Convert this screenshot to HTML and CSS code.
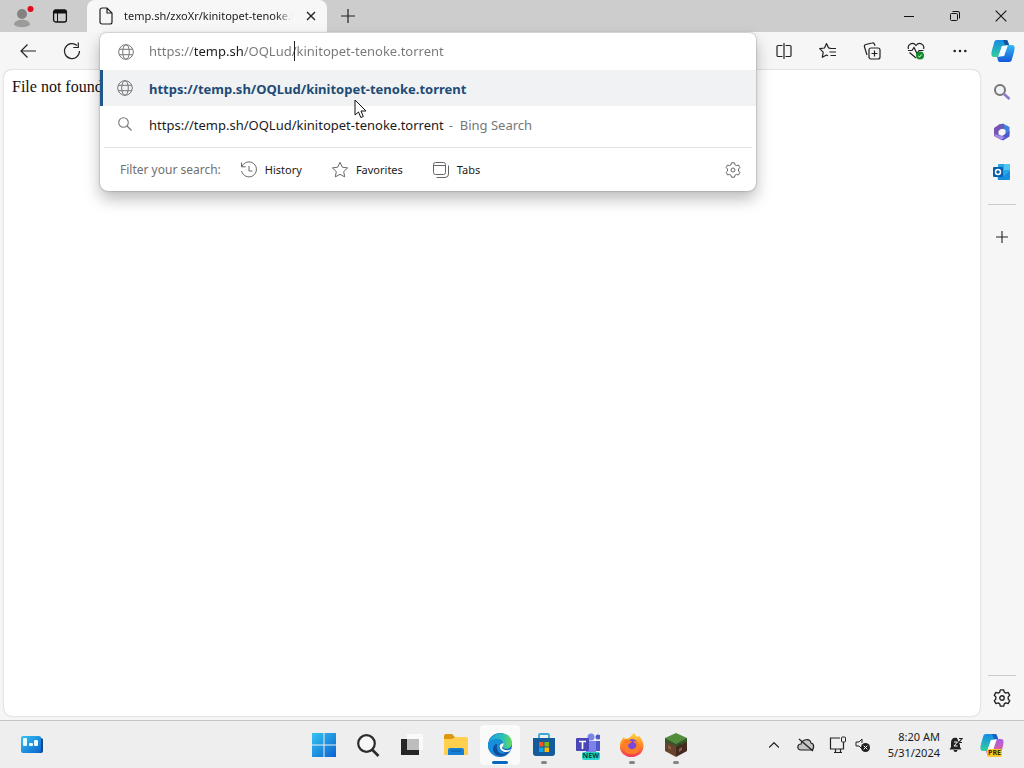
FILE: index.html
```html
<!DOCTYPE html>
<html lang="en">
<head>
<meta charset="utf-8">
<title>temp.sh</title>
<link rel="stylesheet" href="styles.css">
</head>
<body>
<svg class="defs" aria-hidden="true">
  <symbol id="globe" viewBox="0 0 16 16"><g fill="none" stroke="currentColor"><circle cx="8" cy="8" r="7.3"/><ellipse cx="8" cy="8" rx="3.3" ry="7.3"/><path d="M1.3 5.3h13.4M1.3 10.7h13.4"/></g></symbol>
  <linearGradient id="blue" x2="1" y2="1"><stop stop-color="#35c4f3"/><stop offset="1" stop-color="#0b62cf"/></linearGradient>
  <linearGradient id="edgeA" x2="1" y2="0"><stop stop-color="#1aa5df"/><stop offset=".6" stop-color="#2cbfb8"/><stop offset="1" stop-color="#6bdb58"/></linearGradient>
  <linearGradient id="copA" x2="0" y2="1"><stop stop-color="#168be8"/><stop offset="1" stop-color="#32cf9d"/></linearGradient>
  <linearGradient id="copB" x2="0" y2="1"><stop stop-color="#32b9f2"/><stop offset="1" stop-color="#1457dc"/></linearGradient>
  <linearGradient id="preB" x2="0" y2="1"><stop stop-color="#a95ee8"/><stop offset="1" stop-color="#f0647d"/></linearGradient>
  <linearGradient id="fox" x2="0" y2="1"><stop stop-color="#ffd83c"/><stop offset=".5" stop-color="#ff8a26"/><stop offset="1" stop-color="#f5325b"/></linearGradient>
</svg>

<header class="titlebar">
  <button class="title-btn profile" aria-label="Profile"><svg width="24" height="24" viewBox="0 0 24 24"><circle cx="12" cy="9" r="5" fill="#858381"/><path d="M4 19.500c0-6.500 16-6.500 16 0-2 3.500-14 3.500-16 0z" fill="#9d9b99"/><circle cx="20.500" cy="4" r="3" fill="#e00b1c"/></svg></button>
  <button class="title-btn workspaces" aria-label="Tab actions"><svg width="16" height="16" viewBox="0 0 16 16"><rect x="1.600" y="2" width="12.800" height="12" rx="2" fill="none" stroke="#111" stroke-width="1.300"/><path d="M2 2h12v3.500H2z" fill="#111"/><path d="M5.500 5v9" stroke="#111"/></svg></button>
  <div class="tab">
    <svg width="14" height="18" viewBox="0 0 14 18"><path d="M1 3a2 2 0 0 1 2-2h5l5 5v9a2 2 0 0 1-2 2H3a2 2 0 0 1-2-2zM8 1v5h5" fill="none" stroke="#222" stroke-width="1.200"/></svg>
    <span class="tab-title">temp.sh/zxoXr/kinitopet-tenoke.torrent</span>
    <button class="tab-close" aria-label="Close tab"><svg width="10" height="10" viewBox="0 0 10 10"><path d="M1 1l8 8M9 1L1 9" stroke="#222" stroke-width="1.400"/></svg></button>
  </div>
  <button class="new-tab" aria-label="New tab"><svg width="14" height="14" viewBox="0 0 14 14"><path d="M7 0v14M0 7h14" stroke="#222" stroke-width="1.200"/></svg></button>
  <div class="window-controls">
    <button aria-label="Minimize"><svg width="10" height="10" viewBox="0 0 10 10"><path d="M0 5.500h10" stroke="#111"/></svg></button>
    <button aria-label="Restore"><svg width="10" height="10" viewBox="0 0 10 10"><g fill="none" stroke="#111"><rect x=".5" y="2.500" width="7" height="7" rx="1"/><path d="M2.500.5H8A1.500 1.500 0 0 1 9.500 2v5.500"/></g></svg></button>
    <button aria-label="Close"><svg width="12" height="12" viewBox="0 0 12 12"><path d="M.7.7l10.600 10.600M11.300.7L.7 11.300" stroke="#111" stroke-width="1.100"/></svg></button>
  </div>
</header>

<nav class="toolbar">
  <button class="tool" aria-label="Back"><svg width="16" height="14" viewBox="0 0 16 14"><path d="M7.500.5L1 7l6.500 6.500M1 7h15" fill="none" stroke="#222" stroke-width="1.200"/></svg></button>
  <button class="tool" aria-label="Refresh"><svg width="18" height="18" viewBox="0 0 18 18"><path d="M16.500 9A7.500 7.500 0 1 1 14 3.500M15.300.5v5h-5" fill="none" stroke="#222" stroke-width="1.200"/></svg></button>
  <div class="omnibox">
    <div class="popup">
      <label class="address"><svg class="grey" width="16" height="16"><use href="#globe"/></svg><input class="url" type="text" aria-label="Address and search bar" value="https://temp.sh/OQLud/kinitopet-tenoke.torrent"><span class="caret"></span></label>
      <a class="suggestion active" href="#"><svg class="grey" width="16" height="16"><use href="#globe"/></svg><span>https://temp.sh/OQLud/kinitopet-tenoke.torrent</span></a>
      <a class="suggestion" href="#"><svg class="grey" width="16" height="16" viewBox="0 0 16 16"><circle cx="6.500" cy="6.500" r="4.800" fill="none" stroke="currentColor" stroke-width="1.100"/><path d="M10 10l4.500 4.500" stroke="currentColor" stroke-width="1.200"/></svg><span>https://temp.sh/OQLud/kinitopet-tenoke.torrent</span><span class="source">- &nbsp;Bing Search</span></a>
      <div class="filters">
        <span class="filter-label">Filter your search:</span>
        <button class="filter history"><svg width="18" height="18" viewBox="0 0 18 18"><path d="M2 5.500A7.500 7.500 0 1 1 1.600 10M1.500 1.500v4.300h4.300M9 5v5h3.500" fill="none" stroke="currentColor"/></svg><span>History</span></button>
        <button class="filter favorites"><svg width="18" height="18" viewBox="0 0 18 18"><path d="M9 1.300l2.300 4.900 5.300.7-3.900 3.700 1 5.300L9 13.300l-4.700 2.600 1-5.300-3.900-3.700 5.300-.7z" fill="none" stroke="currentColor" stroke-linejoin="round"/></svg><span>Favorites</span></button>
        <button class="filter tabs"><svg width="18" height="18" viewBox="0 0 18 18"><g fill="none" stroke="currentColor"><rect x="1.500" y="1.500" width="12" height="12" rx="2"/><path d="M1.500 4.500h12M4.500 16.500H13a3.500 3.500 0 0 0 3.500-3.500V4.500"/></g></svg><span>Tabs</span></button>
        <button class="filter settings" aria-label="Search settings"><svg width="16" height="16" viewBox="0 0 16 16"><g fill="none" stroke="currentColor"><path id="cog" d="M6.500.8h3l.5 2 1.400.8 2-.6 1.500 2.600L13.500 7v2l1.400 1.400-1.500 2.600-2-.6-1.400.8-.5 2h-3l-.5-2-1.400-.8-2 .6-1.500-2.600L2.500 9V7L1.100 5.600 2.600 3l2 .6L6 2.800z" stroke-linejoin="round"/><circle cx="8" cy="8" r="2"/></g></svg></button>
      </div>
      <svg class="pointer" width="13" height="20" viewBox="0 0 13 20"><path d="M1 1v15l3.500-3 2.300 5.500 2.500-1L7 12h5z" fill="#fff" stroke="#111"/></svg>
    </div>
  </div>
  <button class="tool" aria-label="Split screen"><svg width="16" height="16" viewBox="0 0 16 16"><path d="M6.500 2.500H2.200A1.200 1.200 0 0 0 1 3.700v8.600a1.200 1.200 0 0 0 1.200 1.200h4.300M9.500 2.500h4.300A1.200 1.200 0 0 1 15 3.700v8.600a1.200 1.200 0 0 1-1.200 1.200H9.500M8 0v16" fill="none" stroke="#222" stroke-width="1.200"/></svg></button>
  <button class="tool" aria-label="Favorites"><svg width="18" height="18" viewBox="0 0 18 18"><path d="M11.500 6H9.600L7.500 1.500 5.500 6l-4.800.7 3.500 3.500-.9 5.100 4.200-2.300 1.500.8M10.500 6.500h6.500M10.500 10h6.500M11.500 13.500H17" fill="none" stroke="#222" stroke-width="1.200" stroke-linejoin="round"/></svg></button>
  <button class="tool" aria-label="Collections"><svg width="18" height="18" viewBox="0 0 18 18"><g fill="none" stroke="#222" stroke-width="1.200"><rect x="6" y="6" width="11" height="11" rx="2"/><path d="M11.500 8.500v6M8.500 11.500h6M4 13L1.500 5a2 2 0 0 1 1.300-2.500L9 1a2 2 0 0 1 2.500 1.300l.5 1.500"/></g></svg></button>
  <button class="tool" aria-label="Browser essentials"><svg width="18" height="18" viewBox="0 0 18 18"><path d="M1.500 7C0 3 5.500-1 9 3.500 12.500-1 18 3 16.500 7M2.500 10.500L9 16M1 8.500h4L7 5.500l3 6 2-3h4.500" fill="none" stroke="#222" stroke-width="1.200"/><circle cx="13" cy="13.500" r="4" fill="#10892a"/><path d="M11.300 14l1.200 1 2.300-2.500" stroke="#fff" fill="none"/></svg></button>
  <button class="tool" aria-label="Settings and more"><svg width="14" height="4" viewBox="0 0 14 4"><g fill="#222"><circle cx="1.700" cy="2" r="1.300"/><circle cx="7" cy="2" r="1.300"/><circle cx="12.300" cy="2" r="1.300"/></g></svg></button>
  <button class="tool copilot" aria-label="Copilot"><svg width="24" height="24" viewBox="0 0 24 24"><path d="M6 1h9c2 0 2 2 3 5l-7 1-4 11H3c-3 0-3-3-2-7L3 4c.5-2 1-3 3-3z" fill="url(#copA)"/><path d="M18 23H9c-2 0-2-2-3-5l7-1 4-11h4c3 0 3 3 2 7l-2 7c-.5 2-1 3-3 3z" fill="url(#copB)"/><path d="M11 7h5l-3 10H8z" fill="#f5fcff"/><path d="M12 1h3c2 0 2 2 3 5h-4z" fill="#16549b"/></svg></button>
</nav>

<div class="workspace">
  <main class="page">File not found</main>
  <aside class="sidebar">
    <button aria-label="Search"><svg width="18" height="18" viewBox="0 0 18 18"><circle cx="7" cy="7" r="5" fill="#eef4f8" stroke="#797477" stroke-width="2"/><path d="M11 11l5.500 5" stroke="#8c78ca" stroke-width="2.600"/></svg></button>
    <button aria-label="Microsoft 365"><svg width="18" height="18" viewBox="0 0 18 18"><path d="M5 2l5-1.500L16.500 4v7l-4 2.500V7L8 5z" fill="#3f83dc"/><path d="M6.500 1.200L1 5v8l4.500 2.500V8L11 5V1z" fill="#7656b4"/><path d="M5.500 11.500L9 13l7.500-5v5.500L10 17.500l-6-3z" fill="#4d59cd"/><path d="M1 11l5 1.500L12 14l-4 3-6-3.500z" fill="#a98be6"/><circle cx="9" cy="9" r="3" fill="#f6f6f6"/></svg></button>
    <button aria-label="Outlook"><svg width="18" height="18" viewBox="0 0 18 18"><rect x="5" y="1" width="12" height="14" rx="1" fill="#26a7e8"/><path d="M11 1h6v6h-6z" fill="#52c6f3"/><path d="M4 8l7 5 6-5v8a1 1 0 0 1-1 1H5z" fill="#168de0"/><rect y="4" width="10" height="10" rx="1" fill="#075eae"/><circle cx="5" cy="9" r="2.500" fill="none" stroke="#fff" stroke-width="1.500"/></svg></button>
    <hr>
    <button aria-label="Customize"><svg width="12" height="12" viewBox="0 0 12 12"><path d="M6 0v12M0 6h12" stroke="#222" stroke-width="1.100"/></svg></button>
    <hr class="bottom-rule">
    <button aria-label="Settings"><svg width="18" height="18" viewBox="0 0 16 16"><g fill="none" stroke="#222" stroke-width="1.200"><use href="#cog"/><circle cx="8" cy="8" r="2"/></g></svg></button>
  </aside>
</div>

<footer class="taskbar">
  <button class="widgets" aria-label="Widgets"><svg width="22" height="18" viewBox="0 0 22 18"><rect x="5" y="2" width="17" height="15" rx="2" fill="#104b88"/><rect width="20" height="17" rx="2" fill="url(#blue)"/><rect x="2" y="2" width="4" height="8" rx="1" fill="#e9fbff"/><rect x="8" y="7" width="4" height="3" rx="1" fill="#e9fbff"/><rect x="13" y="4" width="4" height="6" rx="1" fill="#e9fbff"/></svg></button>
  <div class="apps">
    <button class="app" aria-label="Start"><svg width="24" height="24" viewBox="0 0 24 24"><path d="M0 0h11.500v11.500H0zM12.500 0H24v11.500H12.500zM0 12.500h11.500V24H0zM12.500 12.500H24V24H12.500z" fill="url(#blue)"/></svg></button>
    <button class="app" aria-label="Search"><svg width="24" height="24" viewBox="0 0 24 24"><circle cx="10.500" cy="10.500" r="8.300" fill="#f7f7f7" stroke="#2b2b2d" stroke-width="2.200"/><path d="M16.500 17l6 6" stroke="#2b2b2d" stroke-width="2.600"/></svg></button>
    <button class="app" aria-label="Task view"><svg width="24" height="24" viewBox="0 0 24 24"><rect x="7" y="1" width="16" height="16" fill="#fafafa"/><rect x="1" y="6" width="18" height="16" fill="#262626"/><rect x="7" y="6" width="12" height="11" fill="#bdbdbd"/></svg></button>
    <button class="app" aria-label="File Explorer"><svg width="26" height="24" viewBox="0 0 26 24"><path d="M1 3a2 2 0 0 1 2-2h6l3 3v8H1z" fill="#dc9713"/><path d="M1 6h8l3-2h11a2 2 0 0 1 2 2v16H1z" fill="#ffd04e"/><path d="M5 22v-5a2 2 0 0 1 2-2h12a2 2 0 0 1 2 2v5z" fill="#157fd6"/><path d="M8 18h10" stroke="#0b579e"/></svg></button>
    <button class="app current" aria-label="Microsoft Edge"><svg width="24" height="24" viewBox="0 0 24 24"><circle cx="12" cy="12" r="12" fill="#1168c5"/><path d="M1 8C6-3 24-2 24 10c0 5-5 7-9 5-2-1 0-2 0-4 0-5-8-7-14-1z" fill="url(#edgeA)"/><path d="M0 11C3 4 14 5 14 10c-5 2-3 9 4 10-9 7-19 0-18-9z" fill="#168ed9"/><path d="M9 12c-1 9 6 11 12 6-5 7-16 6-16-2 0-3 2-5 4-5z" fill="#104d9d"/><path d="M15 10c2 3-3 4 0 6 3 2 7 1 8 0-1 3-3 3-6 3-5-1-8-7-2-9z" fill="#fff"/></svg></button>
    <button class="app running" aria-label="Microsoft Store"><svg width="24" height="24" viewBox="0 0 24 24"><path d="M7 6V2a1 1 0 0 1 1-1h8a1 1 0 0 1 1 1v4" fill="none" stroke="#3ba7d4" stroke-width="1.800"/><path d="M1 5h22v15a3 3 0 0 1-3 3H4a3 3 0 0 1-3-3z" fill="#155a9a"/><path d="M7 9h4.500v4.500H7z" fill="#f35325"/><path d="M12.500 9H17v4.500h-4.500z" fill="#81bc06"/><path d="M7 14.500h4.500V19H7z" fill="#05a6f0"/><path d="M12.500 14.500H17V19h-4.500z" fill="#ffba08"/></svg></button>
    <button class="app badge-app" aria-label="Microsoft Teams"><svg width="24" height="24" viewBox="0 0 24 24"><circle cx="15" cy="4" r="3.500" fill="#7b83eb"/><circle cx="22" cy="4" r="2.500" fill="#5059c9"/><path d="M10 8h10v12H10z" fill="#7b83eb"/><path d="M20 8h4v10h-4z" fill="#5059c9"/><rect y="5" width="13" height="13" rx="1" fill="#4b46b5"/><path d="M3 8.500h7M6.500 8.500V16" stroke="#fff" stroke-width="1.700"/></svg><span class="badge new">NEW</span></button>
    <button class="app running" aria-label="Firefox"><svg width="24" height="24" viewBox="0 0 24 24"><path d="M4 4l1 2 4-1 5-5 3 4 2-1c8 8 5 20-7 21C0 24-4 12 4 4z" fill="url(#fox)"/><circle cx="12" cy="12" r="6" fill="#7949d9"/><path d="M3 8c4-4 6 0 9 0-1 3-4 2-4 5 1 4 6 4 8 1 1-4-2-5-3-5 2-3 7 1 7 6-3 11-20 7-17-7z" fill="#ff7d27"/></svg></button>
    <button class="app running" aria-label="Minecraft"><svg width="24" height="24" viewBox="0 0 24 24"><path d="M12 0l11 5-11 6L1 5z" fill="#538c3b"/><path d="M1 5l11 6v13L1 18z" fill="#67432d"/><path d="M23 5l-11 6v13l11-6z" fill="#44291f"/><path d="M1 5l11 6 11-6v4l-3 1-2 2-2-1-4 3-3-3-2 1-3-3-2 1z" fill="#315925"/><path d="M4 12l3 2v3l-3-2zM15 16l3-2v3l-3 2z" fill="#8b6346"/></svg></button>
  </div>
  <div class="tray">
    <button aria-label="Show hidden icons"><svg width="10" height="6" viewBox="0 0 10 6"><path d="M0 5.500L5 .7l5 4.800" fill="none" stroke="#222" stroke-width="1.200"/></svg></button>
    <button class="cloud" aria-label="OneDrive"><svg width="18" height="14" viewBox="0 0 18 14"><path d="M4 12C-.5 12 0 6 4 6c1-5 9-6 10-1 4 1 3 7 0 7z" fill="#c4c4c4" stroke="#222" stroke-width="1.200"/><path d="M2 1l14 12" stroke="#222" stroke-width="1.300"/></svg></button>
    <button class="network" aria-label="Network and volume"><svg width="18" height="18" viewBox="0 0 18 18"><path d="M11 2H1.500v11h13V7M5 16.500h8M6.500 13v3.500M11.500 13v3.500M14.500 6v3" fill="none" stroke="#222" stroke-width="1.200"/><rect x="12.500" y="1" width="4" height="5" rx="1" fill="none" stroke="#222"/></svg><svg width="16" height="16" viewBox="0 0 16 16"><path d="M7 12L4 9H1V5h3l3-3v4" fill="none" stroke="#222"/><circle cx="10.500" cy="10.500" r="4.500" fill="#222"/><path d="M8.700 8.700l3.600 3.600M12.300 8.700l-3.600 3.600" stroke="#fff"/></svg></button>
    <button class="clock"><span>8:20 AM</span><span>5/31/2024</span></button>
    <button class="bell" aria-label="Notifications"><svg width="14" height="16" viewBox="0 0 14 16"><path d="M8 1C4 0 2 2 2 6v4l-1.500 2.500h12L11 10V8" fill="#222"/><path d="M4.500 13h4a2 2 0 0 1-4 0z" fill="#222"/><path d="M5 5h3.500L5 9h3.500" stroke="#f4f4f4" fill="none"/><path d="M10 1.500h3l-3 4h3" stroke="#222" fill="none" stroke-width="1.200"/></svg></button>
    <button class="preview badge-app" aria-label="Copilot preview"><svg width="24" height="24" viewBox="0 0 24 24"><path d="M6 1h9c2 0 2 2 3 5l-7 1-4 11H3c-3 0-3-3-2-7L3 4c.5-2 1-3 3-3z" fill="url(#copA)"/><path d="M18 23H9c-2 0-2-2-3-5l7-1 4-11h4c3 0 3 3 2 7l-2 7c-.5 2-1 3-3 3z" fill="url(#preB)"/><path d="M11 7h5l-3 10H8z" fill="#fff"/><path d="M12 1h3c2 0 2 2 3 5h-4z" fill="#165ec2"/></svg><span class="badge pre">PRE</span></button>
  </div>
</footer>
</body>
</html>
```
FILE: styles.css
```css
* { box-sizing: border-box; }
body {
  margin: 0;
  min-height: 100vh;
  display: flex;
  flex-direction: column;
  background: #f6f6f6;
  color: #1b1b1b;
  font: 12px/16px "Noto Sans", "Open Sans", sans-serif;
}
.defs { position: absolute; width: 0; height: 0; }
svg { display: block; flex: none; }
button {
  display: flex;
  align-items: center;
  justify-content: center;
  flex: none;
  padding: 0;
  border: 0;
  background: none;
  color: inherit;
  font: inherit;
}
a { color: inherit; text-decoration: none; }

.titlebar { display: flex; height: 32px; background: #cdcdcd; }
.title-btn { width: 36px; }
.profile { width: 44px; padding-top: 2px; }
.workspaces { width: 32px; margin-right: 11px; }
.tab {
  display: flex;
  align-items: center;
  width: 240px;
  padding: 0 6px 0 12px;
  background: #f7f7f7;
  border-radius: 8px 8px 0 0;
}
.tab-title {
  flex: 1;
  min-width: 0;
  margin-left: 11px;
  overflow: hidden;
  white-space: nowrap;
  font-size: 11px;
  mask-image: linear-gradient(to right, #000 90%, transparent);
}
.tab-close { width: 20px; height: 20px; margin-left: 8px; }
.new-tab { width: 42px; }
.window-controls { display: flex; margin-left: auto; }
.window-controls button { width: 46px; }

.toolbar { display: flex; height: 38px; padding-left: 6px; }
.tool { width: 44px; }
.copilot { width: 42px; }
.omnibox { position: relative; flex: 1; min-width: 0; margin: 0 6px; }
.popup {
  position: absolute;
  z-index: 2;
  top: 1px;
  left: 0;
  right: 0;
  background: #fff;
  border-radius: 6px 6px 8px 8px;
  box-shadow: 0 0 2px #0006, 0 8px 16px #0004;
}
.address { position: relative; display: flex; align-items: center; height: 37px; padding-left: 18px; }
.grey { color: #777; }
.url {
  flex: 1;
  min-width: 0;
  margin-left: 15px;
  padding: 0 0 2px;
  border: 0;
  outline: 0;
  font: 13px/20px "Noto Sans", "Open Sans", sans-serif;
  color: transparent;
  background: linear-gradient(to right, #777 46px, #1b1b1b 46px, #1b1b1b 95px, #777 95px);
  background-clip: text;
}
.caret { position: absolute; left: 194px; top: 8px; width: 1px; height: 20px; background: #222; }
.suggestion {
  display: flex;
  align-items: center;
  height: 36px;
  padding-left: 17px;
  font-size: 13px;
  line-height: 20px;
  white-space: nowrap;
}
.suggestion svg { margin-right: 16px; }
.suggestion span { padding-top: 2px; }
.active { padding-left: 14px; border-left: 3px solid #215887; background: #f1f2f3; color: #1d4b75; font-weight: 700; }
.source { margin-left: 5px; color: #777; }
.filters {
  display: flex;
  align-items: center;
  height: 44px;
  margin: 5px 4px 0;
  padding: 0 11px 0 16px;
  border-top: 1px solid #e2e2e2;
}
.filter-label { color: #707070; margin-right: 19px; }
.filter { gap: 7px; font-size: 11px; }
.filter svg { color: #666; }
.favorites, .tabs { margin-left: 29px; }
.settings { margin-left: auto; }
.pointer { position: absolute; left: 254px; top: 66px; }

.workspace { display: flex; flex: 1; }
.page {
  flex: 1;
  margin: 0 0 4px 4px;
  padding: 8px;
  background: #fff;
  border-radius: 8px;
  box-shadow: 0 0 2px #0004;
  color: #111;
  font: 16px/18px "Liberation Serif", serif;
}
.sidebar { display: flex; flex-direction: column; align-items: center; width: 44px; padding: 2px 0; }
.sidebar button { width: 44px; height: 40px; }
.sidebar hr { width: 28px; margin: 12px 0; border: 0; border-top: 1px solid #ccc; }
.sidebar .bottom-rule { margin: auto 0 2px; }

.taskbar {
  display: grid;
  grid-template-columns: 1fr auto 1fr;
  align-items: center;
  height: 48px;
  padding-right: 12px;
  background: #eee;
  border-top: 1px solid #c5c5c5;
}
.widgets { width: 64px; height: 44px; }
.apps { display: flex; gap: 4px; padding-right: 12px; }
.app { position: relative; width: 40px; height: 40px; border-radius: 4px; }
.current { background: #fafafa; }
.current::after, .running::after {
  content: "";
  position: absolute;
  bottom: 1px;
  left: 17px;
  width: 6px;
  height: 3px;
  border-radius: 2px;
  background: #858585;
}
.current::after { left: 12px; width: 16px; background: #0868bd; }
.badge-app { position: relative; }
.badge { position: absolute; font: 700 7px/8px "Open Sans", sans-serif; border-radius: 2px; padding: 0 1px; }
.new { right: 8px; bottom: 5px; background: #24d6cb; color: #063a3a; }
.pre { right: 10px; bottom: 8px; background: #ffc928; color: #3d2800; }
.tray { display: flex; align-items: center; justify-self: end; }
.tray button { height: 40px; }
.tray button:first-child { width: 32px; }
.cloud { width: 32px; }
.network { width: 56px; gap: 8px; }
.tray .clock { flex-direction: column; align-items: flex-end; font-size: 11px; margin-left: 10px; }
.bell { width: 32px; }
.preview { width: 40px; }
```
